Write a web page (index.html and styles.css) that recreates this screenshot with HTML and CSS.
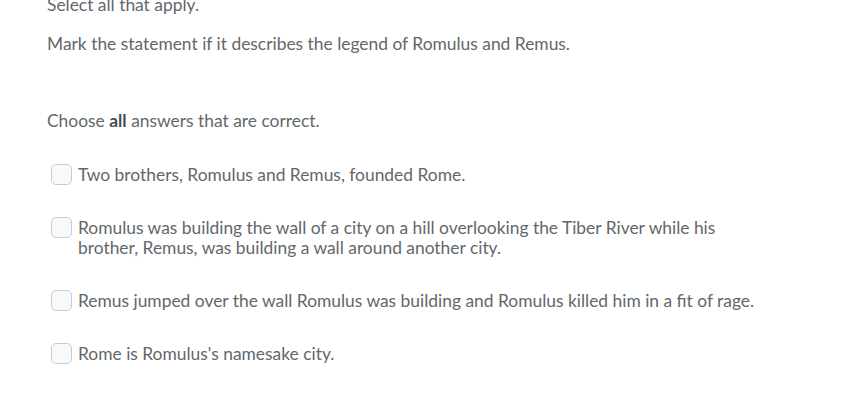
FILE: index.html
```html
<!DOCTYPE html>
<html>
<head>
<meta charset="utf-8">
<link rel="stylesheet" href="styles.css">
</head>
<body>
<div class="question">
  <p class="instr">Select all that apply.</p>
  <p class="stem">Mark the statement if it describes the legend of Romulus and Remus.</p>
  <p class="choose">Choose <b>all</b> answers that are correct.</p>
  <div class="options">
    <label class="opt"><span class="box"></span><span class="txt">Two brothers, Romulus and Remus, founded Rome.</span></label>
    <label class="opt"><span class="box"></span><span class="txt">Romulus was building the wall of a city on a hill overlooking the Tiber River while his brother, Remus, was building a wall around another city.</span></label>
    <label class="opt"><span class="box"></span><span class="txt">Remus jumped over the wall Romulus was building and Romulus killed him in a fit of rage.</span></label>
    <label class="opt"><span class="box"></span><span class="txt">Rome is Romulus's namesake city.</span></label>
  </div>
</div>
</body>
</html>
```
FILE: styles.css
```css
html, body {
  margin: 0;
  padding: 0;
  background: #ffffff;
}
body {
  font-family: Lato, "Open Sans", sans-serif;
  font-size: 17.4px;
  line-height: 20px;
  color: #63676a;
}
.question {
  margin-top: -5px;
  padding-left: 47px;
  width: 720px;
}
.question p {
  margin: 0;
}
.instr {
  margin-bottom: 19px !important;
}
.stem {
  margin-bottom: 57px !important;
}
.choose {
  margin-bottom: 34px !important;
}
.choose b {
  font-weight: 700;
  color: #494c4e;
}
.options {
  display: flex;
  flex-direction: column;
  gap: 33px;
}
.opt {
  display: flex;
  align-items: flex-start;
  gap: 6px;
}
.box {
  flex: none;
  width: 19px;
  height: 19px;
  margin-left: 4px;
  border: 1px solid #c7ccd0;
  border-radius: 5px;
  background: #f8f9fa;
  box-sizing: content-box;
  margin-top: -1px;
}
.txt {
  flex: 1;
}
```
